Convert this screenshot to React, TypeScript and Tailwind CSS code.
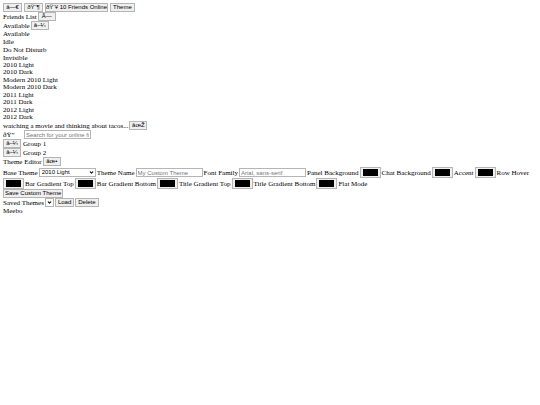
import { useState } from 'react'
import type { ButtonHTMLAttributes, InputHTMLAttributes, SelectHTMLAttributes } from 'react'
import { ChevronDown } from 'lucide-react'
import { twMerge } from 'tailwind-merge'

const statuses = ['Available', 'Idle', 'Do Not Disturb', 'Invisible']

const themeFamilies = [
  ['2010 Light', '2010 Dark'],
  ['Modern 2010 Light', 'Modern 2010 Dark'],
  ['2011 Light', '2011 Dark'],
  ['2012 Light', '2012 Dark'],
]

const colorFields = [
  'Panel Background',
  'Chat Background',
  'Accent',
  'Row Hover',
  'Bar Gradient Top',
  'Bar Gradient Bottom',
  'Title Gradient Top',
  'Title Gradient Bottom',
]

const groups = ['Group 1', 'Group 2']

function Button({ className, ...props }: ButtonHTMLAttributes<HTMLButtonElement>) {
  return (
    <button
      type="button"
      className={twMerge(
        'h-[9px] shrink-0 whitespace-nowrap border border-[#b5b5b5] bg-[#efefef] px-0.5 font-["Liberation_Sans",sans-serif] text-[6px] leading-[7px] text-black',
        className
      )}
      {...props}
    />
  )
}

function IconButton(props: ButtonHTMLAttributes<HTMLButtonElement>) {
  return <Button className="w-[18px] px-0" {...props} />
}

function TextInput(props: InputHTMLAttributes<HTMLInputElement>) {
  return (
    <input
      type="text"
      className='h-[9px] w-[67px] border border-[#b5b5b5] bg-white px-px font-["Liberation_Sans",sans-serif] text-[6px] leading-[7px] placeholder:text-[#757575]'
      {...props}
    />
  )
}

function Select({ className, ...props }: SelectHTMLAttributes<HTMLSelectElement>) {
  return (
    <span className="relative flex shrink-0">
      <select
        className={twMerge(
          'h-[9px] appearance-none border border-[#b5b5b5] bg-white px-0.5 font-["Liberation_Sans",sans-serif] text-[6px] leading-[7px]',
          className
        )}
        {...props}
      />
      <ChevronDown
        className="pointer-events-none absolute top-0.5 right-0.5 size-[5px]"
        strokeWidth={5}
      />
    </span>
  )
}

function ColorField({ label }: { label: string }) {
  const [color, setColor] = useState('#000000')
  const id = label.toLowerCase().replaceAll(' ', '-')

  return (
    <>
      <label htmlFor={id}>{label}</label>
      <input
        id={id}
        type="color"
        value={color}
        onChange={(e) => setColor(e.target.value)}
        className="h-[11px] w-[21px] appearance-none border border-[#b5b5b5] bg-[#efefef] p-px [&::-webkit-color-swatch]:border-0 [&::-webkit-color-swatch-wrapper]:px-px [&::-webkit-color-swatch-wrapper]:py-0"
      />
    </>
  )
}

export default function App() {
  return (
    <main className='bg-white p-[3px] font-["Liberation_Serif",serif] text-[7px] leading-[8px] text-black'>
      <header className="flex gap-0.5">
        <Button className="w-[19px] px-0">â—€</Button>
        <Button className="w-[19px] px-0">ðŸ“¶</Button>
        <Button className="px-0">ðŸ‘¥ 10 Friends Online</Button>
        <Button>Theme</Button>
      </header>

      <div className="flex items-center gap-px">
        <span>Friends List</span>
        <IconButton>Ã—</IconButton>
      </div>
      <div className="flex items-center gap-px">
        <span>Available</span>
        <IconButton>â–¼</IconButton>
      </div>

      <ul>
        {statuses.map((status) => (
          <li key={status}>{status}</li>
        ))}
      </ul>
      <div className="flex flex-col gap-px leading-[7px]">
        {themeFamilies.map((family) => (
          <ul key={family[0]}>
            {family.map((theme) => (
              <li key={theme}>{theme}</li>
            ))}
          </ul>
        ))}
      </div>

      <div className="flex items-center gap-px">
        <span>watching a movie and thinking about tacos...</span>
        <IconButton>âœŽ</IconButton>
      </div>
      <div className="flex items-center">
        <label htmlFor="search" className="w-[21px]">
          ðŸ”
        </label>
        <TextInput id="search" placeholder="Search for your online friends" />
      </div>

      {groups.map((group) => (
        <div key={group} className="flex items-center gap-0.5">
          <IconButton>â–¼</IconButton>
          <span>{group}</span>
        </div>
      ))}

      <section>
        <div className="flex items-center gap-px">
          <span>Theme Editor</span>
          <IconButton>âœ•</IconButton>
        </div>
        <div className="mt-px flex flex-wrap items-center gap-x-px whitespace-nowrap">
          <label htmlFor="base-theme">Base Theme</label>
          <Select id="base-theme" className="w-[57px]">
            {themeFamilies.flat().map((theme) => (
              <option key={theme}>{theme}</option>
            ))}
          </Select>
          <label htmlFor="theme-name">Theme Name</label>
          <TextInput id="theme-name" placeholder="My Custom Theme" />
          <label htmlFor="font-family">Font Family</label>
          <TextInput id="font-family" placeholder="Arial, sans-serif" />
          {colorFields.map((label) => (
            <ColorField key={label} label={label} />
          ))}
          <span>Flat Mode</span>
        </div>
        <Button className="block px-px">Save Custom Theme</Button>
        <div className="flex items-center gap-px">
          <label htmlFor="saved-themes">Saved Themes</label>
          <Select id="saved-themes" className="w-[9px] px-0" />
          <Button>Load</Button>
          <Button>Delete</Button>
        </div>
      </section>

      <footer>Meebo</footer>
    </main>
  )
}
